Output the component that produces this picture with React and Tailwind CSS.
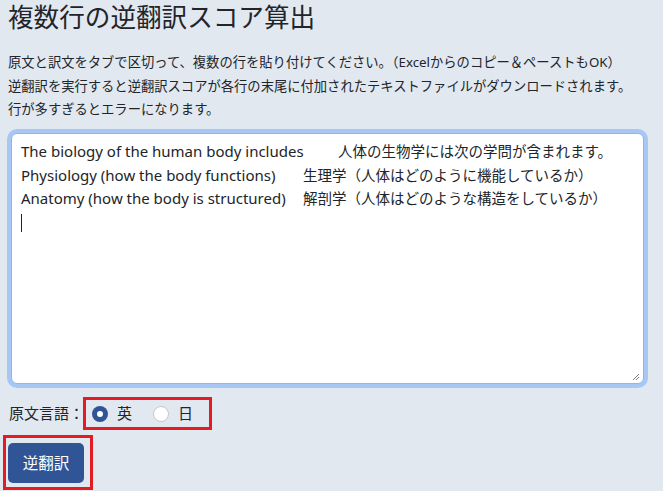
import React, { useState } from 'react';

const rows = [
  { en: 'The biology of the human body includes', ja: '人体の生物学には次の学問が含まれます。', w: 'w-[317px]' },
  { en: 'Physiology (how the body functions)', ja: '生理学（人体はどのように機能しているか）', w: 'w-[282px]' },
  { en: 'Anatomy (how the body is structured)', ja: '解剖学（人体はどのような構造をしているか）', w: 'w-[282px]' },
];

function Radio({ checked, label, onClick, className = '' }) {
  return (
    <button type="button" onClick={onClick} className={`flex items-center ${className}`}>
      {checked ? (
        <span className="w-4 h-4 rounded-full bg-[#2f5597] flex items-center justify-center">
          <span className="w-[6px] h-[6px] rounded-full bg-white" />
        </span>
      ) : (
        <span className="w-4 h-4 rounded-full bg-white border border-[#c4c8cc]" />
      )}
      <span className="ml-[9px] text-[15px] leading-none">{label}</span>
    </button>
  );
}

export default function App() {
  const [lang, setLang] = useState('en');

  return (
    <div
      className="min-h-screen bg-[#e2e8f0] text-[#212529] pl-2"
      style={{ fontFamily: '"Noto Sans", "Noto Sans CJK JP", sans-serif' }}
    >
      <h1 className="text-[25.6px] leading-[36px] font-normal">複数行の逆翻訳スコア算出</h1>

      <p className="mt-[15px] text-[13.3px] leading-[23.6px] whitespace-nowrap">
        原文と訳文をタブで区切って、複数の行を貼り付けてください。（Excelからのコピー＆ペーストもOK）
        <br />
        逆翻訳を実行すると逆翻訳スコアが各行の末尾に付加されたテキストファイルがダウンロードされます。
        <br />
        行が多すぎるとエラーになります。
      </p>

      {/* textarea (focused) */}
      <div className="relative mt-[11.5px] ml-[3px] w-[633px] h-[251px] bg-white border border-[#86b7fe] rounded-[6px] shadow-[0_0_0_4px_#a9c7f4] pl-[9px] pt-[6px] text-[14.5px] leading-[23.5px]">
        {rows.map((r) => (
          <div key={r.en} className="flex items-baseline whitespace-nowrap">
            <span className={`inline-block text-[15px] ${r.w}`}>{r.en}</span>
            <span>{r.ja}</span>
          </div>
        ))}
        <div className="h-[23.5px] flex items-center">
          <span className="w-px h-[18px] bg-[#212529]" />
        </div>
        <svg className="absolute right-[3px] bottom-[2px]" width="8" height="8" viewBox="0 0 8 8">
          <path d="M1 7 L7 1 M4 7 L7 4" stroke="#7a7a7a" strokeWidth="1" />
        </svg>
      </div>

      <div className="mt-[13px] flex items-center">
        <span className="w-[75px] shrink-0 whitespace-nowrap text-[15px] leading-none pl-px">原文言語：</span>
        <div className="h-[33px] flex items-center border-[3px] border-[#e31b23] pl-[6px] pr-[16px]">
          <Radio checked={lang === 'en'} label="英" onClick={() => setLang('en')} />
          <Radio checked={lang === 'ja'} label="日" onClick={() => setLang('ja')} className="ml-[21px]" />
        </div>
      </div>

      <div className="mt-[5px] -ml-[5px] w-[90px] h-[55px] border-[3px] border-[#e31b23] pl-[2px] pt-[5px]">
        <button
          type="button"
          className="w-[76px] h-[40px] rounded-[5px] bg-[#2f5597] text-white text-[15.5px] leading-none"
        >
          逆翻訳
        </button>
      </div>
    </div>
  );
}
